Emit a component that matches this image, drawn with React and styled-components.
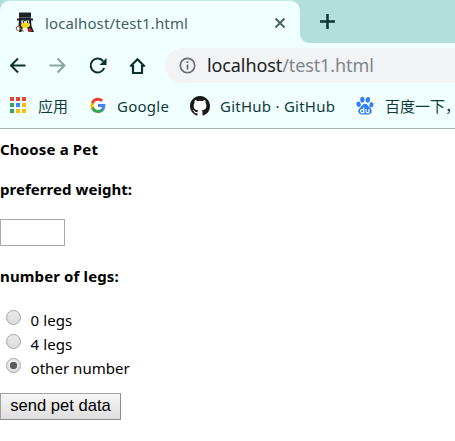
import React from "react";
import styled, { createGlobalStyle } from "styled-components";

const GlobalStyle = createGlobalStyle`
  * { box-sizing: border-box; }
  html, body { margin: 0; padding: 0; overflow: hidden; background: #fff; }
  body { font-family: "Noto Sans", "Noto Sans CJK SC", sans-serif; }
  svg { display: block; flex: none; }
`;

const Window = styled.div`
  width: 455px;
  height: 441px;
  overflow: hidden;
  background: #fff;
`;

const TabStrip = styled.header`
  display: flex;
  height: 43px;
  background: #b2dfdb;
`;

const Tab = styled.div`
  display: flex;
  align-items: center;
  width: 300px;
  height: 43px;
  padding: 1px 14px 0 15px;
  background: #f0ffff;
  border-top: 1px solid #c5eae7;
  border-radius: 10px 10px 0 0;
`;

const TabTitle = styled.span`
  flex: 1;
  margin-left: 10px;
  font-size: 15px;
  line-height: 24px;
  letter-spacing: ${(p) => p.$spacing}px;
  color: #45605f;
  white-space: nowrap;
`;

const StripRest = styled.div`
  flex: 1;
  height: 43px;
  background: #f0ffff;
`;

const StripFill = styled.div`
  height: 43px;
  padding: 13px 0 0 19px;
  background: #b2dfdb;
  border-bottom-left-radius: 9px;
`;

const Toolbar = styled.nav`
  display: flex;
  align-items: center;
  height: 45px;
  padding-left: 8px;
  background: #f0ffff;
`;

const NavIcons = styled.div`
  display: flex;
  gap: 20px;
  width: 157px;
`;

const AddressBar = styled.div`
  display: flex;
  align-items: center;
  flex: 1;
  height: 35px;
  padding-left: 14px;
  background: #f1f3f4;
  border-radius: 18px 0 0 18px;
`;

const Address = styled.span`
  margin-left: 11px;
  padding-bottom: 1px;
  font-size: 18px;
  line-height: 30px;
  letter-spacing: ${(p) => p.$spacing}px;
  color: #80868b;
  white-space: nowrap;
`;

const Host = styled.span`
  color: #202124;
`;

const BookmarksBar = styled.div`
  display: flex;
  height: 41px;
  padding: 6px 0 0 8px;
  background: #f0ffff;
  border-bottom: 1px solid #a5b3b3;
  overflow: hidden;
`;

const Bookmark = styled.div`
  display: flex;
  align-items: center;
  flex: none;
  height: 24px;
  gap: ${(p) => p.$gap}px;
  width: ${(p) => p.$width}px;
`;

const BookmarkLabel = styled.span`
  font-size: 15px;
  line-height: 24px;
  letter-spacing: ${(p) => p.$spacing || 0}px;
  color: #123a38;
  white-space: nowrap;
`;

const Page = styled.main`
  padding-top: 8px;
  color: #000;
`;

const Heading = styled.h1`
  margin: 0 0 ${(p) => p.$after}px;
  font-size: 15px;
  line-height: 24px;
  font-weight: 700;
  letter-spacing: ${(p) => p.$spacing}px;
  white-space: nowrap;
`;

const WeightInput = styled.input`
  display: block;
  width: 65px;
  height: 27px;
  margin: 0 0 18px;
  padding: 0 3px;
  border: 1px solid #a9a9a9;
  border-radius: 0;
  background: #fff;
  outline: none;
`;

const Option = styled.label`
  display: flex;
  height: 24px;
  padding-left: 6px;
`;

const Radio = styled.input`
  appearance: none;
  flex: none;
  width: 15px;
  height: 15px;
  margin: 2px 9.5px 0 0;
  border: 1px solid #a6a6a6;
  border-radius: 50%;
  background: linear-gradient(#e9e9e9, #dcdcdc);
  &:checked {
    background: radial-gradient(circle, #5c5c5c 0 3.4px, transparent 4px), linear-gradient(#ededed, #dedede);
  }
`;

const OptionText = styled.span`
  font-size: 15px;
  line-height: 24px;
  letter-spacing: ${(p) => p.$spacing}px;
  white-space: nowrap;
`;

const SubmitButton = styled.button`
  display: block;
  width: 121px;
  height: 27px;
  margin: 13px 0 0;
  padding: 0 0 2px;
  border: 1px solid #999;
  border-color: #a0a0a0 #8e8e8e #8a8a8a #a0a0a0;
  border-radius: 0;
  background: linear-gradient(#f6f6f6, #dedede);
  font: 16.6px/23px "Liberation Sans", Arial, sans-serif;
  letter-spacing: ${(p) => p.$spacing}px;
  color: #000;
  white-space: nowrap;
`;

const PenguinIcon = () => (
  <svg width="20" height="21" viewBox="0 0 20 21">
    <path d="M4 0.500h12v6h2v2H2v-2h2z" fill="#202428" />
    <path d="M4 5h12v1H4z" fill="#555d62" />
    <path d="M4 8h12l.5 6 2.500 6h-5l-2-2H8l-2 2H4l1-5-1.500-1z" fill="#17191b" />
    <path d="M6 8.500h3l1 1 1-1h3.500l-1 3H6.500z" fill="#dfe5ec" />
    <path d="M8 9h1v2H8zM12 9h1v2h-1z" fill="#24272a" />
    <path d="M6 11.500l4-1 5 1v2.500l-3 2H8l-2-2z" fill="#f4d51f" />
    <path d="M7.500 16h5l.5 3.500H7z" fill="#f5f7f8" />
    <path d="M3.500 19c-3-1-3-5 0-4.500 2 .5 1 2.500 5 5" fill="none" stroke="#8c6045" strokeWidth="1.100" />
    <path d="M13 17l2-1 2 2-1 2h-2z" fill="#c5282b" />
  </svg>
);

const CloseIcon = () => (
  <svg width="12" height="12" viewBox="0 0 12 12">
    <path d="M1.500 1.500l9 9M10.500 1.500l-9 9" stroke="#45605f" strokeWidth="1.800" />
  </svg>
);

const PlusIcon = () => (
  <svg width="17" height="17" viewBox="0 0 17 17">
    <path d="M8.500 1v15M1 8.500h15" stroke="#0d3634" strokeWidth="2.500" />
  </svg>
);

const BackIcon = () => (
  <svg width="20" height="20" viewBox="0 0 20 20">
    <path d="M17.500 9.500H3M10 2.500l-7 7 7 7" fill="none" stroke="#0b302e" strokeWidth="2" />
  </svg>
);

const ForwardIcon = () => (
  <svg width="20" height="20" viewBox="0 0 20 20">
    <path d="M1.500 9.500H16M9.500 2.500l7 7-7 7" fill="none" stroke="#8ca5a3" strokeWidth="2" />
  </svg>
);

const ReloadIcon = () => (
  <svg width="20" height="20" viewBox="0 0 20 20">
    <path d="M15.200 5.200A7 7 0 1 0 16.200 12" fill="none" stroke="#0b302e" strokeWidth="2" />
    <path d="M18.500 2v7h-7z" fill="#0b302e" />
  </svg>
);

const HomeIcon = () => (
  <svg width="20" height="20" viewBox="0 0 20 20">
    <path d="M2.300 10.500L9.500 3.300l7.200 7.200M5 9v8h9V9" fill="none" stroke="#0b302e" strokeWidth="2.200" />
  </svg>
);

const InfoIcon = () => (
  <svg width="17" height="17" viewBox="0 0 17 17">
    <circle cx="8.500" cy="8.500" r="7.200" fill="none" stroke="#6a6e73" strokeWidth="1.700" />
    <path d="M7.600 4.200h1.800V6H7.600zM7.600 7.400h1.800v5H7.600z" fill="#6a6e73" />
  </svg>
);

const APP_COLORS = ["#ea4335", "#ea4335", "#ea4335", "#34a853", "#4285f4", "#fbbc05", "#34a853", "#fbbc05", "#fbbc05"];

const AppsIcon = () => (
  <svg width="20" height="20" viewBox="0 0 20 20">
    {APP_COLORS.map((c, i) => (
      <rect key={i} x={2 + (i % 3) * 6} y={1 + Math.floor(i / 3) * 6} width="4" height="4" fill={c} />
    ))}
  </svg>
);

const GoogleIcon = () => (
  <svg width="20" height="20" viewBox="0 0 20 20">
    <circle cx="10" cy="9.500" r="9.500" fill="#fff" />
    <g transform="translate(1.600 1) scale(.7)">
      <path d="M22.560 12.250c0-.78-.07-1.530-.2-2.250H12v4.260h5.920a5.060 5.060 0 0 1-2.200 3.320v2.770h3.570c2.080-1.920 3.270-4.740 3.270-8.100z" fill="#4285f4" />
      <path d="M12 23c2.970 0 5.460-.98 7.280-2.660l-3.570-2.770a6.700 6.700 0 0 1-9.870-3.480H2.180v2.840A11 11 0 0 0 12 23z" fill="#34a853" />
      <path d="M5.840 14.090a6.600 6.600 0 0 1 0-4.180V7.070H2.180a11 11 0 0 0 0 9.860z" fill="#fbbc05" />
      <path d="M12 5.380c1.620 0 3.060.56 4.210 1.640l3.150-3.150A11 11 0 0 0 2.180 7.070l3.660 2.840A6.600 6.600 0 0 1 12 5.380z" fill="#ea4335" />
    </g>
  </svg>
);

const GitHubIcon = () => (
  <svg width="20" height="20" viewBox="0 0 16 16">
    <circle cx="8" cy="8" r="7.700" fill="#fff" />
    <path fill="#191717" d="M8 0C3.580 0 0 3.580 0 8c0 3.540 2.290 6.530 5.470 7.590.4.07.55-.17.55-.38 0-.19-.01-.82-.01-1.490-2.010.37-2.530-.49-2.690-.94-.09-.23-.48-.94-.82-1.130-.28-.15-.68-.52-.01-.53.63-.01 1.080.58 1.230.82.72 1.210 1.870.87 2.330.66.07-.52.28-.87.51-1.070-1.780-.2-3.640-.89-3.640-3.950 0-.87.31-1.590.82-2.150-.08-.2-.36-1.020.08-2.120 0 0 .67-.21 2.200.82a7.600 7.600 0 0 1 4 0c1.530-1.040 2.200-.82 2.200-.82.44 1.100.16 1.920.08 2.120.51.56.82 1.270.82 2.150 0 3.070-1.870 3.750-3.650 3.950.29.25.54.73.54 1.480 0 1.070-.01 1.930-.01 2.200 0 .21.15.46.55.38A8 8 0 0 0 16 8c0-4.420-3.580-8-8-8z" />
  </svg>
);

const BaiduIcon = () => (
  <svg width="20" height="20" viewBox="0 0 20 20">
    <path d="M0 0h20v20H0z" fill="#fff" />
    <g fill="#2e82f5">
      <ellipse cx="7.400" cy="3.700" rx="2.200" ry="2.900" />
      <ellipse cx="12.800" cy="3.900" rx="2.200" ry="2.900" transform="rotate(8 12.800 3.900)" />
      <ellipse cx="3.600" cy="8.300" rx="2.200" ry="2.700" transform="rotate(-15 3.600 8.300)" />
      <ellipse cx="16.400" cy="8.800" rx="2.100" ry="2.700" transform="rotate(10 16.400 8.800)" />
      <path d="M10 7.800c2.200 0 2.800 2.100 4.400 3.500 2 1.700 2.900 3.300 2.100 5.200-1 2.400-4 2-6.500 2s-5.500.4-6.500-2c-.8-1.900 0-3.500 2-5.200C7.200 9.900 7.800 7.800 10 7.800z" />
    </g>
    <path d="M8.700 11.500v5.100H7a1.500 1.500 0 0 1 0-3h1.700M11 13v2.500c0 .8.400 1.100 1.100 1.100h1.700V13" fill="none" stroke="#fff" strokeWidth="1.200" />
  </svg>
);

export default function App() {
  return (
    <Window>
      <GlobalStyle />
      <TabStrip>
        <Tab>
          <PenguinIcon />
          <TabTitle $spacing={0.12}>localhost/test1.html</TabTitle>
          <CloseIcon />
        </Tab>
        <StripRest>
          <StripFill>
            <PlusIcon />
          </StripFill>
        </StripRest>
      </TabStrip>
      <Toolbar>
        <NavIcons>
          <BackIcon />
          <ForwardIcon />
          <ReloadIcon />
          <HomeIcon />
        </NavIcons>
        <AddressBar>
          <InfoIcon />
          <Address $spacing={-0.1}><Host>localhost</Host>/test1.html</Address>
        </AddressBar>
      </Toolbar>
      <BookmarksBar>
        <Bookmark $gap={10} $width={80}>
          <AppsIcon />
          <BookmarkLabel>应用</BookmarkLabel>
        </Bookmark>
        <Bookmark $gap={9} $width={102}>
          <GoogleIcon />
          <BookmarkLabel $spacing={0.25}>Google</BookmarkLabel>
        </Bookmark>
        <Bookmark $gap={10} $width={165}>
          <GitHubIcon />
          <BookmarkLabel $spacing={0.25}>GitHub · GitHub</BookmarkLabel>
        </Bookmark>
        <Bookmark $gap={10} $width={110}>
          <BaiduIcon />
          <BookmarkLabel>百度一下，</BookmarkLabel>
        </Bookmark>
      </BookmarksBar>
      <Page>
        <Heading $after={16} $spacing={0.16}>Choose a Pet</Heading>
        <Heading as="h2" $after={18} $spacing={0.05}>preferred weight:</Heading>
        <WeightInput aria-label="preferred weight" />
        <Heading as="h2" $after={20} $spacing={0.13}>number of legs:</Heading>
        <Option>
          <Radio type="radio" name="legs" />
          <OptionText $spacing={0.1}>0 legs</OptionText>
        </Option>
        <Option>
          <Radio type="radio" name="legs" />
          <OptionText $spacing={0.1}>4 legs</OptionText>
        </Option>
        <Option>
          <Radio type="radio" name="legs" defaultChecked />
          <OptionText $spacing={0.05}>other number</OptionText>
        </Option>
        <SubmitButton type="button" $spacing={0}>send pet data</SubmitButton>
      </Page>
    </Window>
  );
}
